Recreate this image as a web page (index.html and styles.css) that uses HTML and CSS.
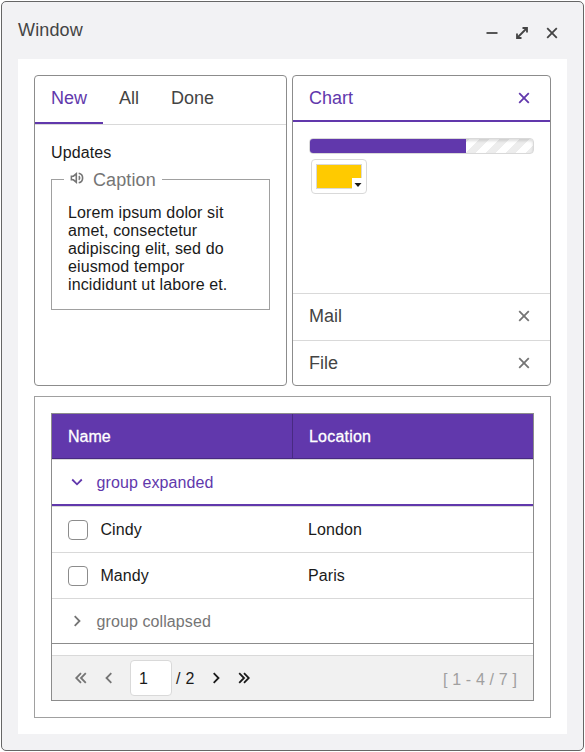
FILE: index.html
```html
<!DOCTYPE html>
<html lang="en">
<head>
<meta charset="utf-8">
<title>Window</title>
<link rel="stylesheet" href="styles.css">
</head>
<body>
<section class="window">
  <header class="window-head">
    <h1>Window</h1>
    <div class="window-tools">
      <svg viewBox="0 0 12 12"><path d="M.5 6h11"/></svg>
      <svg viewBox="0 0 12 12"><path d="M1.500 10.500l9-9M6.500 1h4.500v4.500M1 6.500v4.500h4.500"/></svg>
      <svg viewBox="0 0 12 12"><path d="M1.200 1.200l9.600 9.600M10.800 1.200l-9.600 9.600"/></svg>
    </div>
  </header>
  <main class="window-body">
    <div class="top">
      <section class="tabbox">
        <nav class="tabs">
          <span class="tab active">New</span><span class="tab">All</span><span class="tab">Done</span>
        </nav>
        <div class="tabpanel">
          <div class="updates">Updates</div>
          <div class="groupbox">
            <div class="legend">
              <svg class="speaker" viewBox="0 0 14 12"><path d="M1.400 4.200h2L6.300 1.800v8.400L3.400 7.800h-2zM8.700 4.300a2 2 0 0 1 0 3.400M8.700 1.200a4.900 4.900 0 0 1 0 9.600"/></svg>
              <span>Caption</span>
            </div>
            <p>Lorem ipsum dolor sit amet, consectetur adipiscing elit, sed do eiusmod tempor incididunt ut labore et.</p>
          </div>
        </div>
      </section>
      <section class="accordion">
        <div class="acc-head selected"><span>Chart</span><svg viewBox="0 0 12 12"><path d="M1.200 1.200l9.600 9.600M10.800 1.200l-9.600 9.600"/></svg></div>
        <div class="acc-body">
          <div class="progress"><div class="progress-fill"></div></div>
          <div class="colorbox"><div class="swatch"><span class="corner"><svg viewBox="0 0 8 4"><path d="M.5 0h7L4 4z"/></svg></span></div></div>
        </div>
        <div class="acc-head"><span>Mail</span><svg viewBox="0 0 12 12"><path d="M1.200 1.200l9.600 9.600M10.800 1.200l-9.600 9.600"/></svg></div>
        <div class="acc-head last"><span>File</span><svg viewBox="0 0 12 12"><path d="M1.200 1.200l9.600 9.600M10.800 1.200l-9.600 9.600"/></svg></div>
      </section>
    </div>
    <section class="grid-frame">
      <div class="grid">
        <div class="cols"><span>Name</span><span>Location</span></div>
        <div class="group open"><svg viewBox="0 0 12 12"><path d="M1.200 3.500L6 8.300l4.800-4.800"/></svg><span>group expanded</span></div>
        <div class="row"><div class="cell"><i class="check"></i>Cindy</div><div class="cell">London</div></div>
        <div class="row"><div class="cell"><i class="check"></i>Mandy</div><div class="cell">Paris</div></div>
        <div class="group closed"><svg viewBox="0 0 12 12"><path d="M3.700 1.200L8.500 6l-4.800 4.800"/></svg><span>group collapsed</span></div>
        <footer class="pager">
          <svg class="muted first" viewBox="0 0 12 12"><path d="M6 1.200L1.200 6 6 10.800M10.800 1.200L6 6l4.800 4.800"/></svg>
          <svg class="muted prev" viewBox="0 0 12 12"><path d="M8.300 1.200L3.500 6l4.800 4.800"/></svg>
          <span class="page">1</span>
          <span class="total">/ 2</span>
          <svg class="next" viewBox="0 0 12 12"><path d="M3.700 1.200L8.500 6l-4.800 4.800"/></svg>
          <svg class="end" viewBox="0 0 12 12"><path d="M1.200 1.200L6 6l-4.800 4.800M6 1.200L10.800 6 6 10.800"/></svg>
          <span class="info">[ 1 - 4 / 7 ]</span>
        </footer>
      </div>
    </section>
  </main>
</section>
</body>
</html>
```

FILE: styles.css
```css
* { box-sizing: border-box; }
body {
  margin: 0;
  padding: 1px;
  background: #fff;
  color: #1a1a1a;
  font: 16px/18px "Liberation Sans", Helvetica, Arial, sans-serif;
}
svg {
  display: block;
  flex: none;
  width: 12px;
  height: 12px;
  fill: none;
  stroke: currentColor;
  stroke-width: 1.8;
}
.window {
  width: 583px;
  height: 750px;
  padding: 0 16px 16px;
  border: 1px solid #666;
  border-radius: 5px;
  background: #f2f2f4;
}
.window-head {
  display: flex;
  justify-content: space-between;
  height: 57px;
  color: #444;
}
.window-head h1 {
  margin: 17px 0 0;
  font-size: 18px;
  line-height: 22px;
  font-weight: 400;
  letter-spacing: .15px;
}
.window-tools { display: flex; gap: 18px; padding: 25px 9px 0 0; }
.window-body { height: 675px; padding: 16px; background: #fff; }
.top { display: flex; gap: 5px; height: 311px; margin-bottom: 10px; }
.tabbox, .accordion { border: 1px solid #8c8c8c; border-radius: 4px; }
.tabbox { width: 253px; }
.tabs { display: flex; height: 49px; border-bottom: 1px solid #d9d9d9; }
.tab {
  height: 48px;
  padding: 0 16px;
  font-size: 18px;
  line-height: 44px;
  color: #444;
}
.tab.active { color: #6138ac; border-bottom: 2px solid #6138ac; }
.tabpanel { padding: 19px 16px 0; }
.updates { height: 35px; letter-spacing: .1px; }
.groupbox {
  height: 131px;
  padding: 0 16px;
  border: 1px solid #a0a0a0;
}
.legend {
  display: flex;
  width: 98px;
  height: 22px;
  margin: -11px 0 13px -4px;
  padding-left: 6px;
  background: #fff;
  color: #757575;
  font-size: 18px;
  line-height: 23px;
  letter-spacing: .1px;
}
.speaker { width: 14px; height: 12px; margin: 3px 9px 0 0; stroke-width: 1.6; }
.groupbox p { width: 180px; margin: 0; letter-spacing: .12px; }
.accordion { display: flex; flex-direction: column; width: 259px; overflow: hidden; }
.acc-head {
  display: flex;
  flex: none;
  align-items: center;
  justify-content: space-between;
  height: 47px;
  padding: 0 20px 2px 16px;
  border-top: 1px solid #d9d9d9;
  font-size: 18px;
  color: #444;
}
.acc-head svg { color: #757575; }
.acc-head.selected {
  height: 46px;
  padding-bottom: 0;
  border-top: 0;
  border-bottom: 2px solid #6138ac;
  color: #6138ac;
}
.acc-head.selected svg { color: #6138ac; }
.acc-head.last { height: 45px; padding-bottom: 0; }
.acc-body { flex: 1; padding: 16px; }
.progress {
  height: 16px;
  width: 225px;
  border: 1px solid #d9d9d9;
  border-radius: 4px;
  overflow: hidden;
  background: repeating-linear-gradient(135deg, #fff 0 7.070px, #ededed 7.070px 14.140px);
  box-shadow: inset 0 2px 3px #0002;
}
.progress-fill { width: 156px; height: 14px; background: #6138ac; }
.colorbox {
  width: 56px;
  height: 35px;
  margin: 5px 0 0 2px;
  padding: 4px;
  border: 1px solid #d9d9d9;
  border-radius: 4px;
}
.swatch {
  display: flex;
  align-items: flex-end;
  justify-content: flex-end;
  width: 46px;
  height: 25px;
  background: #ffca00;
  box-shadow: inset 0 0 0 1px #d9d9d9;
}
.corner { width: 10px; height: 11px; padding: 5px 0 0 2px; background: #fff; }
.corner svg { width: 8px; height: 4px; fill: #1a1a1a; stroke: none; }
.grid-frame { height: 322px; padding: 16px; border: 1px solid #a0a0a0; }
.grid { height: 288px; border: 1px solid #8c8c8c; }
.cols {
  display: flex;
  height: 46px;
  background: #6138ac;
  border-bottom: 1px solid #d9d9d9;
  color: #fff;
  line-height: 46px;
  -webkit-text-stroke: .3px #fff;
}
.cols span { width: 240px; height: 45px; padding-left: 16px; border-bottom: 1px solid #482a82; }
.cols span + span { flex: 1; border-left: 1px solid #482a82; letter-spacing: .2px; }
.group { display: flex; align-items: center; padding-left: 19px; }
.group span { margin: 2px 0 0 13.500px; letter-spacing: .1px; }
.group.open { height: 46px; border-bottom: 2px solid #6138ac; color: #6138ac; }
.row { display: flex; align-items: center; height: 47px; border: solid #d9d9d9; border-width: 1px 0; }
.row + .row { height: 46px; border-top: 0; }
.cell { display: flex; align-items: center; width: 240px; padding-left: 16px; letter-spacing: .1px; }
.check {
  width: 20px;
  height: 20px;
  margin-right: 12.400px;
  border: 1px solid #8c8c8c;
  border-radius: 4px;
}
.group.closed { height: 45px; border-bottom: 1px solid #8c8c8c; color: #757575; }
.pager {
  display: flex;
  align-items: center;
  height: 45px;
  margin-top: 11px;
  padding: 0 16px 0 23px;
  border-top: 1px solid #d9d9d9;
  background: #f1f1f1;
}
.pager .muted { color: #757575; }
.pager .prev { margin-left: 16px; }
.page {
  width: 42px;
  height: 36px;
  margin: 0 4px 0 15px;
  padding-left: 8px;
  border: 1px solid #d9d9d9;
  border-radius: 4px;
  background: #fff;
  line-height: 35px;
}
.total { width: 20px; padding-top: 1px; white-space: nowrap; letter-spacing: .3px; }
.pager .next { margin-left: 14px; }
.pager .end { margin-left: 16px; }
.info { margin-left: auto; padding-top: 3px; color: #a0a0a0; letter-spacing: .15px; }
```
